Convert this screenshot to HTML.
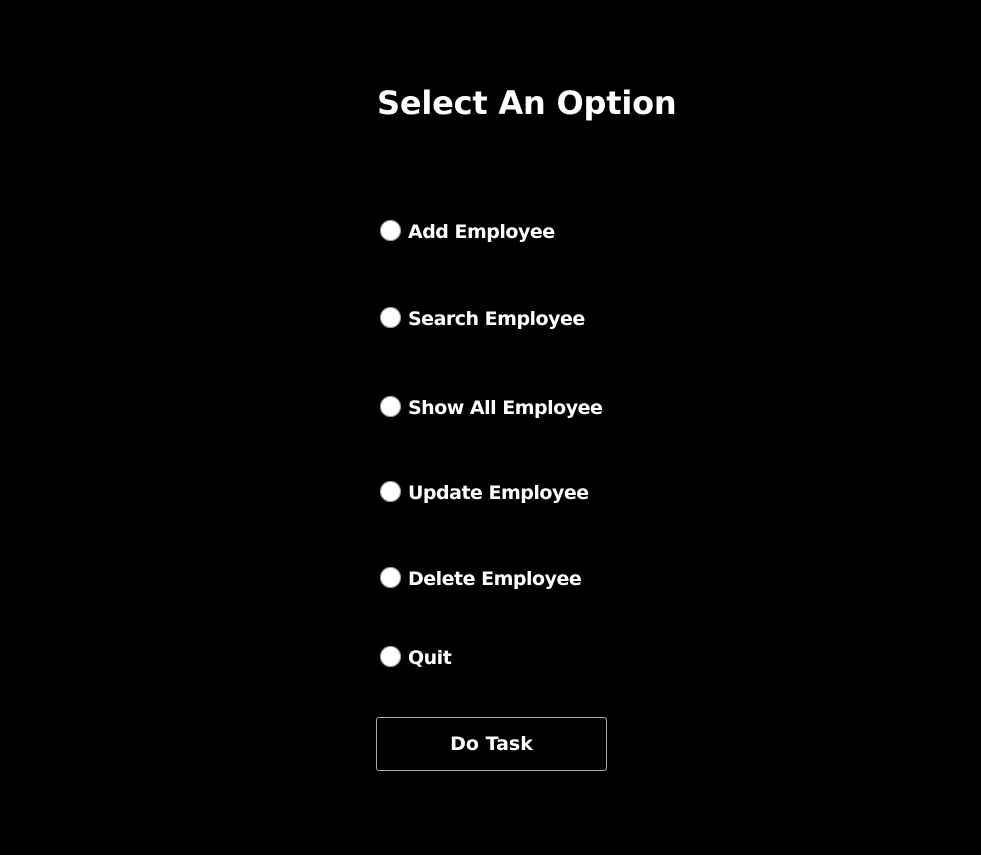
<!DOCTYPE html>
<html><head><style>
body{margin:0;background:#000;width:981px;height:855px;position:relative;overflow:hidden;font-family:"DejaVu Sans","Liberation Sans",sans-serif;font-weight:bold;color:#fff}
h1{position:absolute;left:377px;top:81px;margin:0;font-size:32px;line-height:44px;letter-spacing:-0.2px}
.r{position:absolute;left:380px;height:24px;line-height:24px;font-size:19px;letter-spacing:-0.5px}
.r i{position:absolute;left:0;top:1px;width:21px;height:21px;border-radius:50%;background:#fff;box-shadow:inset 0 0 0 1px #999}
.r span{position:absolute;left:28px;top:1px;white-space:nowrap}
.b{position:absolute;left:376px;top:717px;width:229px;height:52px;border:1px solid #aaa;border-radius:3px;text-align:center;line-height:52px;font-size:19px}
</style></head><body>
<h1>Select An Option</h1>
<div class="r" style="top:219px"><i></i><span>Add Employee</span></div>
<div class="r" style="top:306px"><i></i><span>Search Employee</span></div>
<div class="r" style="top:395px"><i></i><span>Show All Employee</span></div>
<div class="r" style="top:480px"><i></i><span>Update Employee</span></div>
<div class="r" style="top:566px"><i></i><span>Delete Employee</span></div>
<div class="r" style="top:645px"><i></i><span>Quit</span></div>
<div class="b">Do Task</div>
</body></html>
